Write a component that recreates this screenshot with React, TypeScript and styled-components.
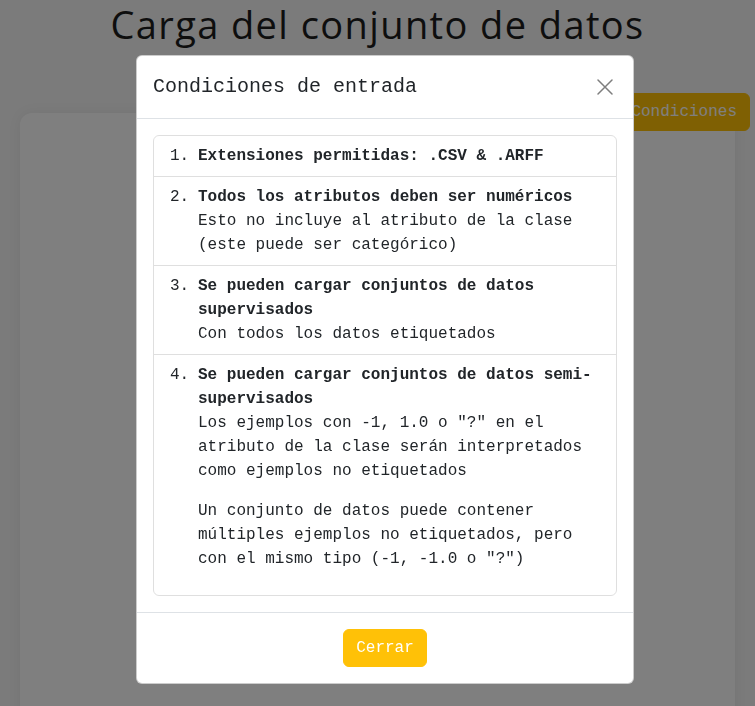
import React from "react";
import styled, { createGlobalStyle } from "styled-components";

const GlobalStyle = createGlobalStyle`
  html, body { margin: 0; padding: 0; }
  body {
    background: #f6f6f6;
    font-family: "Liberation Mono", "Courier New", monospace;
    color: #212529;
    overflow: hidden;
  }
  * { box-sizing: border-box; }
`;

const Page = styled.div`
  position: relative;
  height: 706px;
  padding: 0 20px;
  overflow: hidden;
`;

const Title = styled.h1`
  margin: 0;
  padding-top: 3px;
  text-align: center;
  font-family: "Open Sans", "Lato", sans-serif;
  font-weight: 400;
  font-size: 38px;
  line-height: 42px;
  letter-spacing: 1.4px;
  color: #1d1d1d;
`;

const Card = styled.div`
  margin-top: 68px;
  height: 620px;
  background: #ffffff;
  border-radius: 12px;
  box-shadow: 0 0 14px rgba(0, 0, 0, 0.06);
`;

const FloatingButton = styled.button`
  position: absolute;
  top: 93px;
  right: 5px;
  height: 38px;
  padding: 6px 12px;
  border: 1px solid #ffc107;
  border-radius: 6px;
  background: #ffc107;
  color: #ffffff;
  font-family: "Liberation Mono", "Courier New", monospace;
  font-size: 16px;
  line-height: 24px;
`;

const Backdrop = styled.div`
  position: fixed;
  inset: 0;
  background: rgba(0, 0, 0, 0.5);
  display: flex;
  justify-content: center;
  align-items: flex-start;
  padding: 55px 0 0 15px;
`;

const Dialog = styled.div`
  width: 498px;
  background: #ffffff;
  border: 1px solid rgba(0, 0, 0, 0.2);
  border-radius: 6px;
  display: flex;
  flex-direction: column;
`;

const Header = styled.div`
  display: flex;
  align-items: center;
  justify-content: space-between;
  padding: 16px;
  border-bottom: 1px solid #dee2e6;
`;

const DialogTitle = styled.h5`
  margin: 0;
  font-size: 20px;
  line-height: 30px;
  font-weight: 400;
  color: #212529;
`;

const CloseButton = styled.button`
  width: 24px;
  height: 24px;
  padding: 4px;
  border: 0;
  background: transparent;
  display: flex;
  align-items: center;
  justify-content: center;
  opacity: 0.5;
  cursor: pointer;
`;

const Body = styled.div`
  padding: 16px;
`;

const List = styled.ol`
  margin: 0;
  padding: 0;
  list-style: none;
  border: 1px solid rgba(0, 0, 0, 0.125);
  border-radius: 6px;
`;

const Item = styled.li`
  display: flex;
  padding: 8px 16px;
  font-size: 16px;
  line-height: 24px;
  & + & {
    border-top: 1px solid rgba(0, 0, 0, 0.125);
  }
`;

const Num = styled.span`
  flex: 0 0 auto;
  width: 28px;
`;

const Content = styled.div`
  flex: 1;
`;

const ItemTitle = styled.div`
  font-weight: 700;
`;

const Para = styled.p`
  margin: 0 0 16px 0;
`;

const Footer = styled.div`
  display: flex;
  justify-content: center;
  padding: 12px;
  border-top: 1px solid #dee2e6;
`;

const CloseAction = styled.button`
  margin: 4px;
  height: 38px;
  padding: 6px 12px;
  border: 1px solid #ffc107;
  border-radius: 6px;
  background: #ffc107;
  color: #ffffff;
  font-family: "Liberation Mono", "Courier New", monospace;
  font-size: 16px;
  line-height: 24px;
`;

const XIcon = () => (
  <svg width="16" height="16" viewBox="0 0 16 16" fill="none">
    <path d="M1 1 L15 15 M15 1 L1 15" stroke="#000" strokeWidth="1.5" strokeLinecap="round" />
  </svg>
);

export default function App() {
  return (
    <>
      <GlobalStyle />
      <Page>
        <Title>Carga del conjunto de datos</Title>
        <FloatingButton>Condiciones</FloatingButton>
        <Card />
      </Page>
      <Backdrop>
        <Dialog>
          <Header>
            <DialogTitle>Condiciones de entrada</DialogTitle>
            <CloseButton aria-label="Cerrar">
              <XIcon />
            </CloseButton>
          </Header>
          <Body>
            <List>
              <Item>
                <Num>1.</Num>
                <Content>
                  <ItemTitle>Extensiones permitidas: .CSV &amp; .ARFF</ItemTitle>
                </Content>
              </Item>
              <Item>
                <Num>2.</Num>
                <Content>
                  <ItemTitle>Todos los atributos deben ser numéricos</ItemTitle>
                  Esto no incluye al atributo de la clase (este puede ser categórico)
                </Content>
              </Item>
              <Item>
                <Num>3.</Num>
                <Content>
                  <ItemTitle>Se pueden cargar conjuntos de datos supervisados</ItemTitle>
                  Con todos los datos etiquetados
                </Content>
              </Item>
              <Item>
                <Num>4.</Num>
                <Content>
                  <ItemTitle>Se pueden cargar conjuntos de datos semi-supervisados</ItemTitle>
                  <Para>
                    Los ejemplos con -1, 1.0 o "?" en el atributo de la clase serán interpretados como
                    ejemplos no etiquetados
                  </Para>
                  <Para>
                    Un conjunto de datos puede contener múltiples ejemplos no etiquetados, pero con el
                    mismo tipo (-1, -1.0 o "?")
                  </Para>
                </Content>
              </Item>
            </List>
          </Body>
          <Footer>
            <CloseAction>Cerrar</CloseAction>
          </Footer>
        </Dialog>
      </Backdrop>
    </>
  );
}
